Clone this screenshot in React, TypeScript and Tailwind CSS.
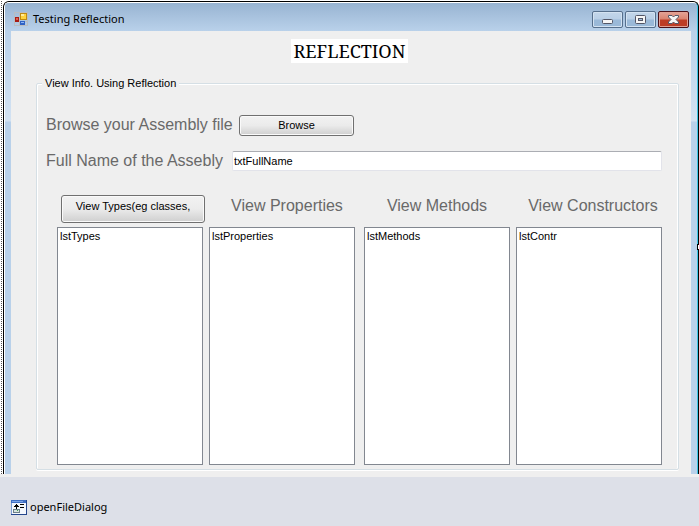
import type { ReactNode } from 'react'

interface ListColumn {
  id: string
  label: string
  item: string
  labelClass: string
}

const LEFT_COLUMN: ListColumn = {
  id: 'lstProperties',
  label: 'View Properties',
  item: 'lstProperties',
  labelClass: 'pl-2.5',
}

const RIGHT_COLUMNS: ListColumn[] = [
  { id: 'lstMethods', label: 'View Methods', item: 'lstMethods', labelClass: '' },
  { id: 'lstContr', label: 'View Constructors', item: 'lstContr', labelClass: 'pl-2' },
]

const FORM_BUTTON =
  'rounded-[3px] border border-[#707070] bg-linear-to-b from-[#f2f2f2] from-0% via-[#ebebeb] via-50% to-[#cfcfcf] text-[11px] text-black shadow-[inset_0_0_0_1px_#fafafa]'

/** Windows Forms application icon: red, yellow and blue tiles. */
function FormIcon(): ReactNode {
  return (
    <svg width="14" height="14" viewBox="0 0 14 14" aria-hidden="true" shapeRendering="crispEdges">
      <rect x="0.5" y="0.5" width="13" height="13" fill="none" stroke="#b9bcc0" />
      <path d="M5.5 0V14M0 9.5H14" stroke="#b9bcc0" />
      <rect x="1" y="5" width="4" height="5" fill="#a81c14" />
      <rect x="2" y="6" width="2" height="2" fill="#e0604c" />
      <rect x="6" y="1" width="7" height="7" fill="#c08a10" />
      <rect x="7" y="2" width="5" height="5" fill="#ffd23c" />
      <rect x="7" y="2" width="3" height="2" fill="#ffeb9c" />
      <rect x="6" y="9" width="5" height="4" fill="#2f62c4" />
      <rect x="7" y="10" width="3" height="1" fill="#8fb6f4" />
    </svg>
  )
}

/** Component tray icon of a file dialog. */
function DialogIcon(): ReactNode {
  return (
    <svg width="16" height="15" viewBox="0 0 16 15" aria-hidden="true" shapeRendering="crispEdges">
      <rect width="16" height="15" fill="#24468c" />
      <rect width="15" height="14" fill="#7f9fd4" />
      <rect width="15" height="3" fill="#3f6fc4" />
      <rect x="1" y="1" width="11" height="1" fill="#7aa4e8" />
      <rect x="1" y="3" width="14" height="11" fill="#f4f7fd" />
      <path d="M5 4h1v1h1v1h1v1H6v2H5V7H3V6h1V5h1zM9 4h4v1H9zM9 7h4v1H9z" fill="#000" />
      <rect x="2" y="9" width="7" height="4" fill="#6c8088" />
      <rect x="3" y="10" width="5" height="2" fill="#d8e4e0" />
      <rect x="6" y="10" width="1" height="1" fill="#3c9c50" />
    </svg>
  )
}

function CaptionButton({
  label,
  className,
  children,
}: {
  label: string
  className: string
  children: ReactNode
}): ReactNode {
  return (
    <button
      type="button"
      aria-label={label}
      className={`flex h-[17px] w-[31px] items-center justify-center rounded-xs border ${className}`}
    >
      {children}
    </button>
  )
}

const CAPTION_BLUE =
  'border-[#566f8c] bg-linear-to-b from-[#c3d6ea] from-0% via-[#b9cfe6] via-48% to-[#9ab9d8] to-52% shadow-[inset_0_0_0_1px_#d3e2f1]'
const CAPTION_RED =
  'border-[#4a1018] bg-linear-to-b from-[#e4a396] from-0% via-[#d9826f] via-48% to-[#bd3c25] to-52% shadow-[inset_0_0_0_1px_#e0a094]'

function TitleBar(): ReactNode {
  return (
    <header className="flex h-7 items-start bg-linear-to-b from-[#98b4d2] to-[#b9d1ea] pr-2 pl-[9px]">
      <div className="flex flex-1 items-center gap-[5px] pt-2">
        <FormIcon />
        <h1 className="font-['Noto_Sans','Open_Sans',sans-serif] text-[11px] leading-4 text-black">
          Testing Reflection
        </h1>
      </div>
      <div className="flex gap-0.5 pt-2">
        <CaptionButton label="Minimize" className={CAPTION_BLUE}>
          <svg width="11" height="11" viewBox="0 0 11 11" aria-hidden="true">
            <rect x="0.5" y="5.5" width="10" height="4" rx="1" fill="#f6f6f6" stroke="#535666" />
          </svg>
        </CaptionButton>
        <CaptionButton label="Maximize" className={CAPTION_BLUE}>
          <svg width="11" height="9" viewBox="0 0 11 9" aria-hidden="true">
            <rect x="0.5" y="0.5" width="10" height="8" rx="1" fill="#f6f6f6" stroke="#535666" />
            <rect x="3.5" y="3.5" width="4" height="2" fill="#a4bfdc" stroke="#535666" />
          </svg>
        </CaptionButton>
        <CaptionButton label="Close" className={CAPTION_RED}>
          <svg width="11" height="9" viewBox="0 0 11 9" aria-hidden="true">
            <path
              d="M0.5 0.5H4L5.5 2 7 0.5h3.5v1.5L8 4.5l2.5 2.5v1.5H7L5.5 7 4 8.5H0.5V7L3 4.5 0.5 2z"
              fill="#f6f6f6"
              stroke="#535666"
            />
          </svg>
        </CaptionButton>
      </div>
    </header>
  )
}

function ListBox({ id, item, label }: { id: string; item: string; label?: string }): ReactNode {
  return (
    <select
      id={id}
      size={4}
      aria-label={label}
      className="block h-[238px] w-full rounded-none border border-[#828790] bg-white pt-0.5 text-[11px] leading-[13px] text-black"
    >
      <option className="pl-0.5">{item}</option>
    </select>
  )
}

function LabelledList({ column }: { column: ListColumn }): ReactNode {
  return (
    <div className="min-w-0 flex-1">
      <label
        htmlFor={column.id}
        className={`flex h-[33px] justify-center text-base leading-6 whitespace-nowrap text-[#696969] ${column.labelClass}`}
      >
        {column.label}
      </label>
      <ListBox id={column.id} item={column.item} />
    </div>
  )
}

function ReflectionForm(): ReactNode {
  return (
    <main className="flex-1 bg-[#efefef] pr-3 pb-1 pl-[25px]">
      <div className="flex justify-center pt-2 pr-4">
        <h2 className="bg-white px-[3px] font-['Noto_Serif','Liberation_Serif',serif] text-lg leading-6 text-black">
          REFLECTION
        </h2>
      </div>

      <fieldset className="mt-3 min-w-0 rounded-xs border border-[#d5dfe5] pr-4 pb-1 pl-[9px] shadow-[inset_1px_1px_0_#fff,inset_-1px_0_0_#fff,0_1px_0_#fff]">
        <legend className="-ml-1 bg-[#efefef] px-[3px] text-[11px] leading-4 text-black">
          View Info. Using Reflection
        </legend>

        <div className="flex items-center pt-[22px]">
          <label htmlFor="browse" className="w-[193px] text-base leading-6 whitespace-nowrap text-[#696969]">
            Browse your Assembly file
          </label>
          <button id="browse" type="button" aria-label="Browse" className={`h-[21px] w-[115px] ${FORM_BUTTON}`}>
            Browse
          </button>
        </div>

        <div className="mt-3 flex items-center">
          <label
            htmlFor="txtFullName"
            className="w-[186px] text-base leading-6 whitespace-nowrap text-[#696969]"
          >
            Full Name of the Assebly
          </label>
          <input
            id="txtFullName"
            type="text"
            defaultValue="txtFullName"
            className="h-5 min-w-0 flex-1 rounded-xs border border-[#e2e3ea] border-t-[#abadb3] bg-white px-px text-[11px] text-black"
          />
        </div>

        <div className="flex items-end gap-[9px] pt-5 pl-[11px]">
          <div className="flex flex-1 items-end gap-1.5">
            <div className="min-w-0 flex-1">
              <div className="-mr-0.5 h-[34px] pl-1">
                <button type="button" className={`h-7 w-full pb-1.5 whitespace-nowrap ${FORM_BUTTON}`}>
                  View Types(eg classes,
                </button>
              </div>
              <ListBox id="lstTypes" item="lstTypes" label="Types" />
            </div>
            <LabelledList column={LEFT_COLUMN} />
          </div>
          <div className="flex flex-1 items-end gap-1.5">
            {RIGHT_COLUMNS.map((column) => (
              <LabelledList key={column.id} column={column} />
            ))}
          </div>
        </div>
      </fieldset>
    </main>
  )
}

export default function App(): ReactNode {
  return (
    <div className="flex min-h-screen flex-col overflow-x-clip bg-[#dde0e8] font-['Liberation_Sans',Arial,sans-serif]">
      <div className="border-b-3 border-[#efefef] bg-white pt-px pl-px">
        <div className="border-l border-dotted border-[#555] pl-px">
          <div className="relative rounded-t-md border-x border-t border-black bg-black">
            <div className="overflow-hidden rounded-t-[5px] border-t border-r border-l border-white border-r-[#3cc4e4] bg-[#b9d1ea]">
              <TitleBar />
              <div className="flex bg-linear-to-b from-[#b9d1ea] from-0% via-[#d3e2f2] via-[90px] to-[#b9d1ea] to-[91px] px-1.5">
                <ReflectionForm />
              </div>
            </div>
            {/* resize handle */}
            <span className="absolute top-[242px] -right-[5px] size-1.5 border border-black bg-white" />
          </div>
        </div>
      </div>

      <footer className="flex items-center gap-[3px] px-[11px] pt-5">
        <DialogIcon />
        <span className="font-['Noto_Sans','Open_Sans',sans-serif] text-[11px] leading-5 text-black">
          openFileDialog
        </span>
      </footer>
    </div>
  )
}
